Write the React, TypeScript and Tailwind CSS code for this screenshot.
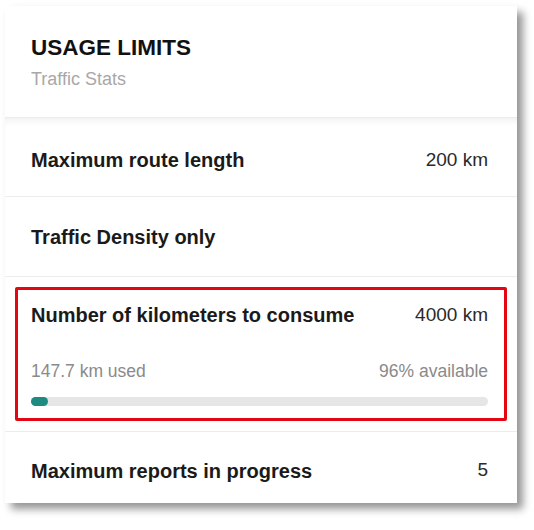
import React from 'react';

interface LimitRow {
  label: string;
  value: string;
}

const used = 147.7;
const total = 4000;

const UsageRow: React.FC<LimitRow & { className?: string }> = ({ label, value, className = '' }) => (
  <div className={`flex items-center justify-between pl-[26px] pr-[29px] border-b border-[#ececec] ${className}`}>
    <span className="text-[20px] font-bold text-[#1a1a1a]">{label}</span>
    <span className="text-[19px] text-[#2a2a2a]">{value}</span>
  </div>
);

export default function App() {
  const pctUsed = (used / total) * 100;
  const pctAvailable = Math.round(100 - pctUsed);

  return (
    <div className="w-[534px] h-[530px] bg-white overflow-hidden" style={{ fontFamily: '"Liberation Sans", Arial, sans-serif' }}>
      <div className="ml-[5px] mt-[6px] w-[512px] h-[497px] bg-white shadow-[6px_6px_8px_rgba(0,0,0,0.42)] flex flex-col">
        {/* Header */}
        <div className="h-[112px] pl-[26px] pt-[28px]">
          <h2 className="text-[22.5px] leading-[28px] font-bold text-[#111]">USAGE LIMITS</h2>
          <p className="text-[18px] leading-[24px] text-[#a8a8a8] mt-[5px]">Traffic Stats</p>
        </div>

        {/* Limits list */}
        <div className="flex flex-col border-t border-[#ececec] shadow-[inset_0_8px_8px_-6px_rgba(0,0,0,0.07)]">
          <UsageRow label="Maximum route length" value="200 km" className="h-[79px] pt-[6px]" />
          <UsageRow label="Traffic Density only" value="" className="h-[80px]" />

          {/* Highlighted consumption row */}
          <div className="h-[155px] px-[10px] pt-[10px] border-b border-[#ececec]">
            <div className="h-[134px] border-[3px] border-[#e30613] rounded-[2px] pl-[13px] pr-[16px] pt-[10px]">
              <div className="flex items-center justify-between">
                <span className="text-[20px] font-bold text-[#1a1a1a]">Number of kilometers to consume</span>
                <span className="text-[19px] text-[#2a2a2a]">{total} km</span>
              </div>
              <div className="flex items-center justify-between mt-[28px] text-[17.5px] text-[#8a8a8a]">
                <span>{used} km used</span>
                <span>{pctAvailable}% available</span>
              </div>
              <div className="mt-[13px] h-[9px] rounded-full bg-[#e6e6e6]">
                <div className="h-full rounded-full bg-[#1e8a80]" style={{ width: `${pctUsed}%` }} />
              </div>
            </div>
          </div>

          <UsageRow label="Maximum reports in progress" value="5" className="h-[71px] pt-[6px] border-b-0" />
        </div>
      </div>
    </div>
  );
}
